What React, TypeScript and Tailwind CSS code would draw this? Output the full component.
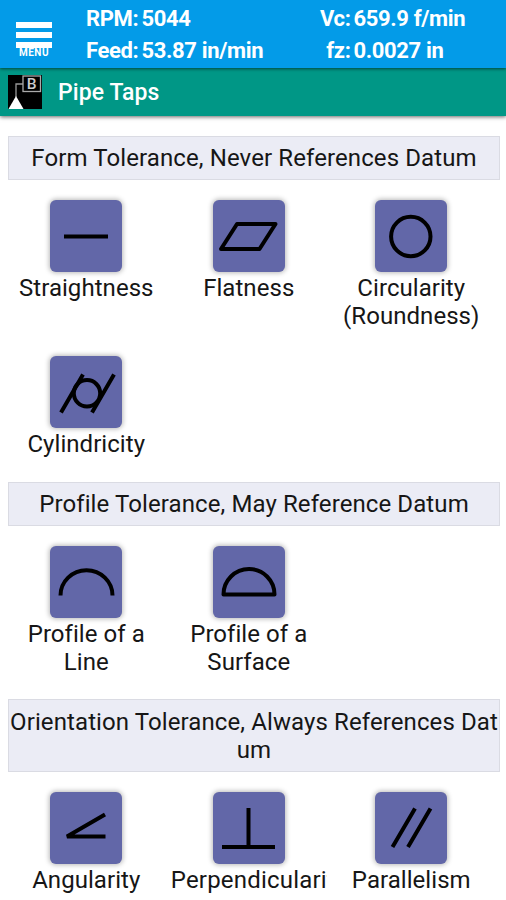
import type { ReactNode } from "react";

type Item = { label: string; icon: ReactNode; noWrap?: boolean };

function Reading({ name, value, nameWidth }: { name: string; value: string; nameWidth: string }) {
  return (
    <div className="flex h-8 items-center whitespace-nowrap">
      <span className={`${nameWidth} shrink-0`}>{name}</span>
      <span>{value}</span>
    </div>
  );
}

function Tile({ label, icon, noWrap }: Item) {
  return (
    <div className="flex w-[162.5px] flex-col items-center">
      <div className="h-[72px] w-[72px] rounded-[6px] bg-[#6267a8] shadow-[0_0_5px_1px_rgba(0,0,0,0.28)]">
        <svg viewBox="0 0 72 72" className="h-full w-full" fill="none" stroke="#000" strokeWidth="4">
          {icon}
        </svg>
      </div>
      <div
        className={`mt-[2px] leading-7 ${noWrap ? "w-[156px] overflow-hidden text-left tracking-[0.2px] whitespace-nowrap" : "w-[157px] px-1 text-center tracking-[0.05px]"}`}
      >
        {label}
      </div>
    </div>
  );
}

function Section({ title, items, className, padding = "py-[7px]" }: { title: string; items: Item[]; className: string; padding?: string }) {
  return (
    <section className={className}>
      <h2
        className={`mr-[6px] ml-2 border border-[#dadbe3] bg-[#ebecf5] text-center leading-7 break-all ${padding}`}
      >
        {title}
      </h2>
      <div className="ml-[5px] flex flex-wrap gap-y-[26px] pt-5">
        {items.map((item) => (
          <Tile key={item.label} {...item} />
        ))}
      </div>
    </section>
  );
}

const form: Item[] = [
  { label: "Straightness", icon: <path d="M14 36.5H58" /> },
  { label: "Flatness", icon: <path d="M24 24H62.5L46.5 49H8Z" strokeLinejoin="round" /> },
  { label: "Circularity (Roundness)", icon: <circle cx="35.8" cy="36.5" r="19.7" /> },
  {
    label: "Cylindricity",
    icon: (
      <>
        <circle cx="37" cy="37.3" r="13.2" />
        <path d="M11 56.5L33 18.5M42 56.5L64 18.5" />
      </>
    ),
  },
];

const profile: Item[] = [
  { label: "Profile of a Line", icon: <path d="M10.5 49.5A26 25.3 0 0 1 62.5 49.5" /> },
  {
    label: "Profile of a Surface",
    icon: <path d="M10.5 48.5A25.5 25.5 0 0 1 61.5 48.5Z" strokeLinejoin="round" />,
  },
];

const orientation: Item[] = [
  { label: "Angularity", icon: <path d="M55 22.5L17 44.5H55.5" strokeLinejoin="bevel" /> },
  { label: "Perpendicularity", noWrap: true, icon: <path d="M9 55H62M35.5 16V55" /> },
  { label: "Parallelism", icon: <path d="M17.5 55L40 16.5M33 55L55.5 16.5" /> },
];

export default function App() {
  return (
    <div className="h-[900px] w-[506px] overflow-hidden bg-white font-['Roboto',sans-serif] text-[24px] tracking-[0.1px] text-[#161616]">
      <header className="relative z-20 flex h-[68px] bg-[#039be8] pt-[2px] text-[22px] font-bold tracking-[-0.35px] text-white shadow-[0_1px_3px_rgba(0,0,0,0.55)]">
        <div className="flex w-[86px] flex-col pt-5 pl-4">
          <div className="flex w-9 flex-col gap-[4px]">
            <div className="h-[6px] bg-white" />
            <div className="h-[6px] bg-white" />
            <div className="h-[6px] bg-white" />
          </div>
          <div className="w-9 text-center text-[10px] leading-[10px] tracking-[0.5px]">MENU</div>
        </div>
        <div className="w-[233px]">
          <Reading name="RPM:" value="5044" nameWidth="w-[55.5px]" />
          <Reading name="Feed:" value="53.87 in/min" nameWidth="w-[55.5px]" />
        </div>
        <div>
          <Reading name="Vc:" value="659.9 f/min" nameWidth="w-[34.5px] text-right pr-[3px]" />
          <Reading name="fz:" value="0.0027 in" nameWidth="w-[34.5px] text-right pr-[3px]" />
        </div>
      </header>
      <div className="relative z-10 flex h-12 items-center bg-[#009786] pl-2 text-white shadow-[0_1px_4px_rgba(0,0,0,0.6)]">
        <svg viewBox="0 0 34 34" className="h-[34px] w-[34px]" fill="none">
          <rect width="34" height="34" fill="#000" />
          <path d="M8 22V9H15" stroke="#999" strokeWidth="1.3" />
          <rect x="15" y="1" width="17.5" height="15.5" stroke="#aaa" strokeWidth="1.3" />
          <path d="M8 21L15.5 34H0.5Z" fill="#fff" />
          <text x="23.8" y="14.3" textAnchor="middle" fill="#ccc" fontSize="15.5" fontWeight="500" fontFamily="Roboto, sans-serif">
            B
          </text>
        </svg>
        <span className="mt-[2px] ml-4 text-[23px] font-medium">Pipe Taps</span>
      </div>
      <main>
        <Section title="Form Tolerance, Never References Datum" items={form} className="mt-5" />
        <Section title="Profile Tolerance, May Reference Datum" items={profile} className="mt-6" />
        <Section
          title="Orientation Tolerance, Always References Datum"
          items={orientation}
          className="mt-[23px]"
          padding="pt-2 pb-[7px]"
        />
      </main>
    </div>
  );
}
